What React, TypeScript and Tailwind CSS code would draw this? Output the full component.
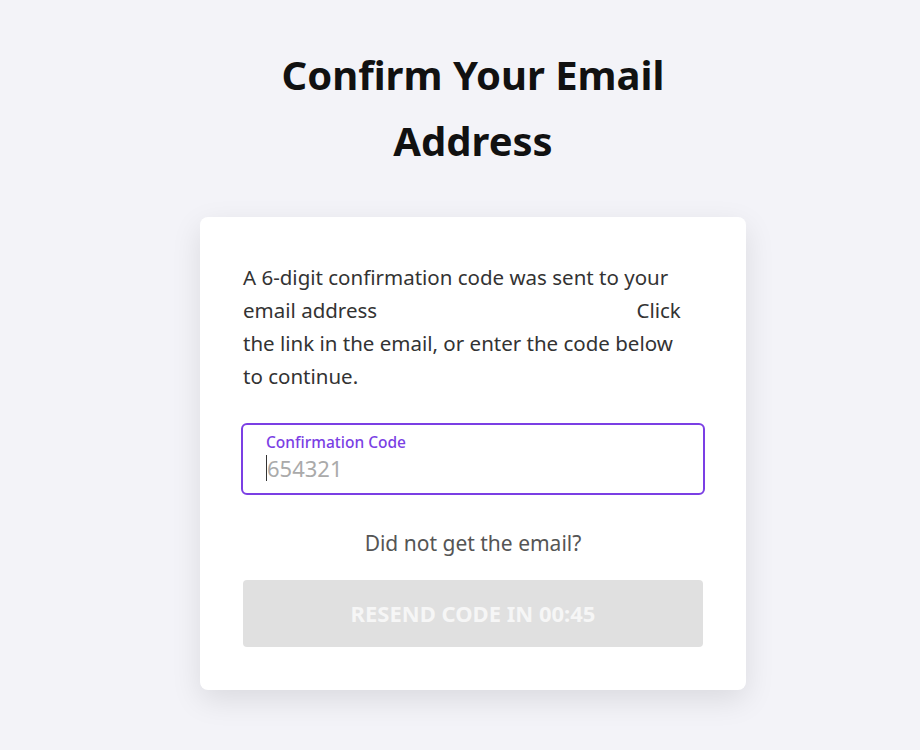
export default function App() {
  return (
    <div className="min-h-screen w-full bg-[#f3f3f8] flex flex-col items-center pt-[42px] pl-[26px] font-['Noto_Sans',sans-serif]">
      <h1 className="w-[440px] text-center text-[40px] leading-[66px] font-bold text-[#111]">
        Confirm Your Email Address
      </h1>

      <div className="mt-[43px] w-[546px] bg-white rounded-lg shadow-[0_10px_30px_rgba(0,0,0,0.10)] px-[43px] pt-[44px] pb-[43px] flex flex-col">
        <p className="text-[20.5px] leading-[33px] text-[#333] whitespace-nowrap">
          A 6-digit confirmation code was sent to your
          <br />
          email address<span className="inline-block w-[254px]"></span> Click
          <br />
          the link in the email, or enter the code below
          <br />
          to continue.
        </p>

        <div className="mt-[30px] -mx-[2px] h-[72px] border-2 border-[#7b3fe4] rounded-md px-[23px] pt-[8px] flex flex-col">
          <label className="text-[15.5px] leading-[18px] font-medium text-[#7b3fe4]">Confirmation Code</label>
          <div className="flex items-center mt-[3px]">
            <span className="w-px h-[26px] bg-[#333]"></span>
            <input
              className="flex-1 outline-none text-[22px] leading-[28px] text-[#333] placeholder:text-[#aaa] bg-transparent"
              placeholder="654321"
            />
          </div>
        </div>

        <div className="mt-[35px] text-center text-[21px] leading-[26px] text-[#555]">Did not get the email?</div>

        <button className="mt-[24px] h-[67px] w-full rounded bg-[#e0e0e0] text-[22px] font-bold text-[#f6f6f6] uppercase">
          Resend Code in 00:45
        </button>
      </div>
    </div>
  )
}
